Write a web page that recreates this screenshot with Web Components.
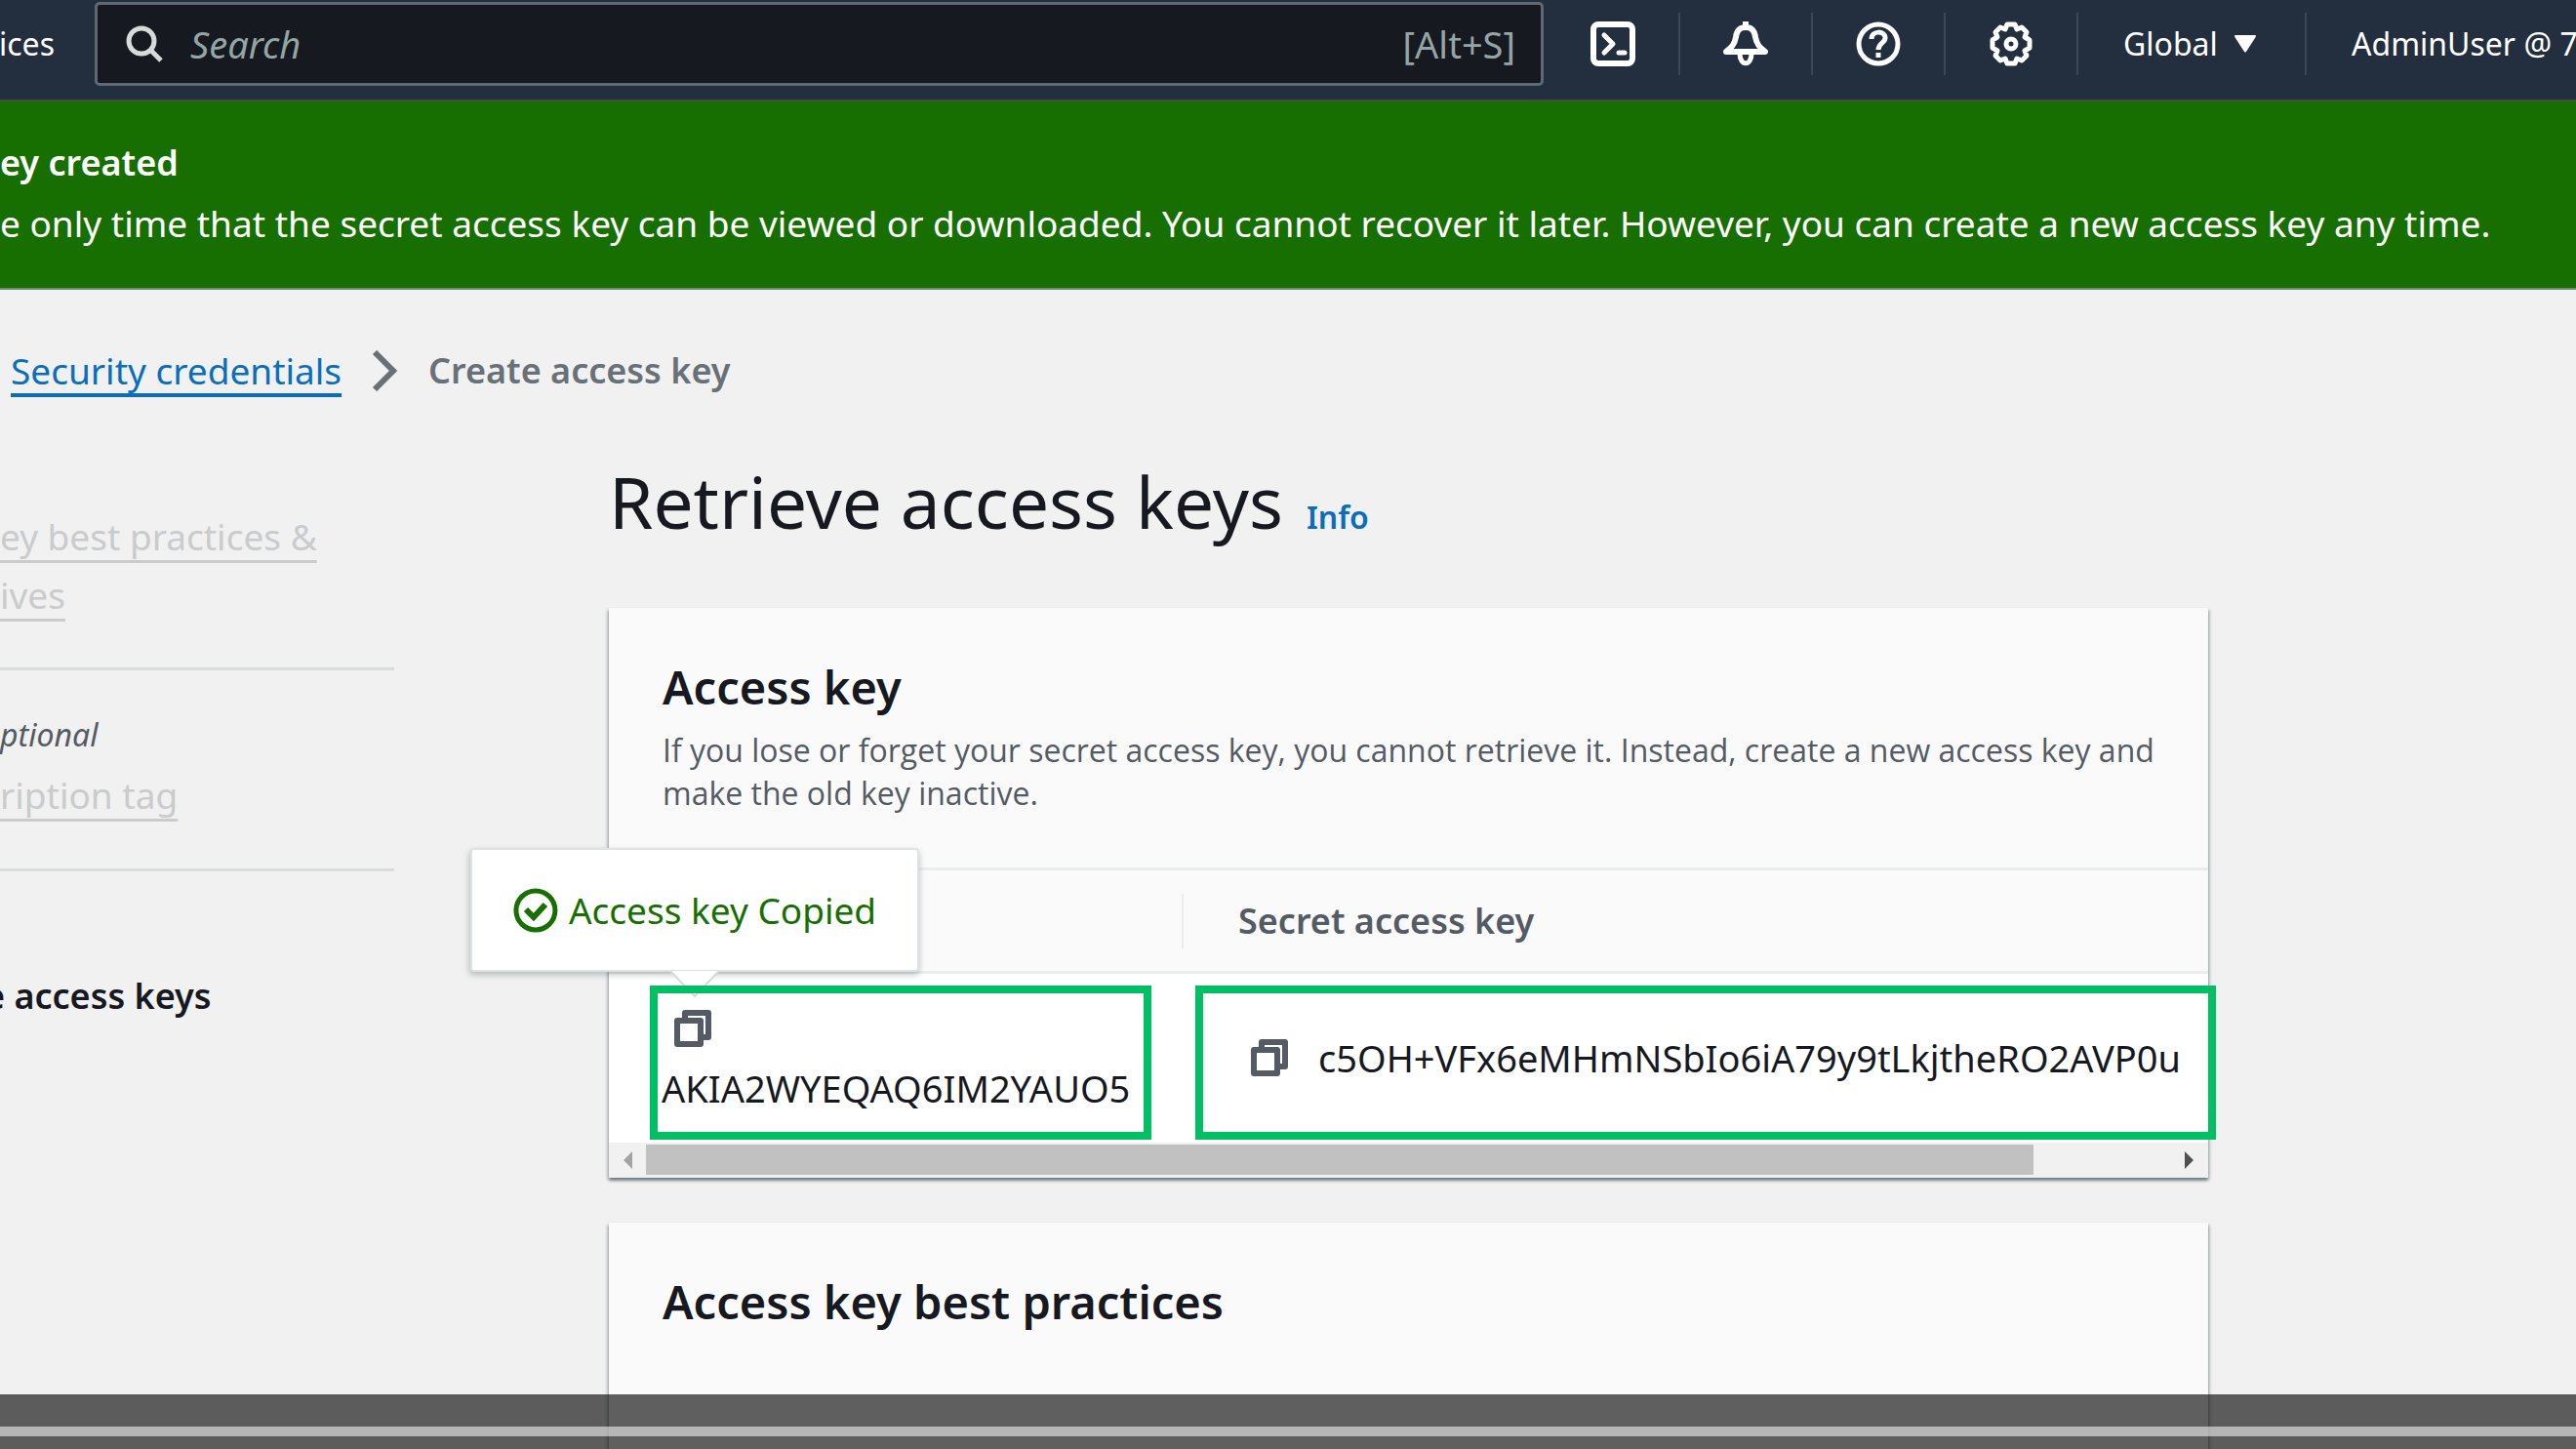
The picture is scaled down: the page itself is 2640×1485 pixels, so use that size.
<!DOCTYPE html>
<html lang="en">
<head>
<meta charset="utf-8">
<title>Retrieve access keys</title>
<style>
  html, body { margin: 0; height: 100%; }
  body {
    --ink: #16191f; --muted: #545b64; --link: #0a6ebd; --green: #166f00; --line: #eaeded; --mark: #00c063;
    --body: 37px; --bold: 36px; --key: 38px; --small: 32px;
    font-family: "Noto Sans", "Open Sans", sans-serif;
    font-size: var(--body); line-height: 60px; color: var(--ink);
    background: #f1f1f1; overflow: hidden;
  }
</style>
</head>
<body>
<console-page></console-page>
<script>
const define = (name, html) => customElements.define(name, class extends HTMLElement {
  constructor() {
    super();
    this.attachShadow({ mode: 'open' }).innerHTML =
      '<style>*{box-sizing:border-box}button{font:inherit;color:inherit;background:none;border:0;padding:0;margin:0;cursor:pointer}svg{display:block}</style>' + html;
  }
});

define('nav-icon', `
<style>
  :host { display: flex; flex: none; width: 136px; height: 64px; align-items: center; justify-content: center; border-right: 2px solid #3b4757; }
  button { display: flex; }
</style>
<button><slot></slot></button>`);

define('top-bar', `
<style>
  :host { display: block; color: #fff; }
  header { display: flex; align-items: center; height: 104px; padding-bottom: 12px; background: #232f3e; border-bottom: 2px solid #3f5043; font-size: var(--small); overflow: hidden; white-space: nowrap; }
  .services { flex: none; width: 97px; padding-right: 41px; display: flex; justify-content: flex-end; }
  label { flex: 1; min-width: 0; height: 86px; margin-right: 4px; display: flex; align-items: center; gap: 27px; padding: 0 26px 0 29px; background: #16191f; border: 3px solid #5f6873; border-radius: 5px; font-size: var(--key); color: #95a5a6; }
  label svg { flex: none; }
  input { flex: 1; min-width: 0; font: italic 38px "Noto Sans", sans-serif; color: inherit; background: none; border: 0; padding: 0; outline: 0; }
  input::placeholder { color: #95a5a6; opacity: 1; }
  .menu { flex: none; display: flex; align-items: center; height: 64px; }
  .region { width: 234px; padding-left: 46px; gap: 17px; border-right: 2px solid #3b4757; }
  .user { width: 276px; padding-left: 46px; }
</style>
<header>
  <button class="services">ices</button>
  <label>
    <svg width="39" height="39" viewBox="0 0 39 39" fill="none" stroke="#d5dbdb" stroke-width="5"><circle cx="16" cy="16" r="13"/><path d="M25 25L36 36"/></svg>
    <input type="text" placeholder="Search" aria-label="Search"><span>[Alt+S]</span>
  </label>
  <nav-icon><svg width="46" height="46" viewBox="0 0 46 46" fill="none" stroke="#fff" stroke-width="6" stroke-linejoin="round"><rect x="3" y="3" width="40" height="40" rx="5"/><path d="M14 14l9 9-9 9" stroke-linecap="round" stroke-width="5"/><path d="M29 32h6" stroke-linecap="round" stroke-width="5"/></svg></nav-icon>
  <nav-icon><svg width="46" height="46" viewBox="0 0 46 46" fill="none" stroke="#fff" stroke-width="6" stroke-linejoin="round"><path d="M23 0v6"/><path d="M3 31C10 26 12 22 13 16C14 9 17 6 23 6S32 9 33 16C34 22 36 26 43 31Z"/><path d="M17 33c0 13 12 13 12 0" stroke-width="5"/></svg></nav-icon>
  <nav-icon><svg width="46" height="46" viewBox="0 0 46 46" fill="none" stroke="#fff" stroke-width="5"><circle cx="23" cy="23" r="20"/><path d="M16 18c0-9 14-9 14-1c0 5-7 5-7 12"/><path d="M23 32v5"/></svg></nav-icon>
  <nav-icon><svg width="46" height="46" viewBox="0 0 46 46" fill="none" stroke="#fff" stroke-width="5" stroke-linejoin="round"><path d="M19 3h8l2 5 5-2 5 5-2 5 5 3v8l-5 3 2 5-5 5-5-2-2 5h-8l-2-5-5 2-5-5 2-5-5-3v-8l5-3-2-5 5-5 5 2z"/><circle cx="23" cy="23" r="5"/></svg></nav-icon>
  <button class="menu region">Global <svg width="22" height="18" viewBox="0 0 22 18" fill="#fff"><path d="M1 0h20q2 0 0 3L12 17q-1 1-2 0L1 3q-2-3 0-3z"/></svg></button>
  <button class="menu user">AdminUser @ 7</button>
</header>`);

define('flash-bar', `
<style>
  :host { display: block; padding: 32px 0 35px; background: var(--green); color: #fff; border-bottom: 2px solid #6f8a72; white-space: nowrap; overflow: hidden; line-height: 62px; }
  .title { font-size: var(--bold); font-weight: 600; }
</style>
<div class="title"><slot name="title"></slot></div>
<div><slot></slot></div>`);

define('bread-crumbs', `
<style>
  nav { display: flex; align-items: center; height: 60px; padding-left: 11px; gap: 31px; white-space: nowrap; }
  a { color: var(--link); text-decoration: underline; text-decoration-thickness: 4px; text-underline-offset: 9px; text-decoration-skip-ink: none; }
  b { font-size: var(--bold); font-weight: 600; color: #687078; }
</style>
<nav aria-label="Breadcrumbs">
  <a href="#credentials">Security credentials</a>
  <svg width="27" height="42" viewBox="0 0 27 42" fill="none" stroke="#687078" stroke-width="6"><path d="M3 2l19 19L3 40"/></svg>
  <b>Create access key</b>
</nav>`);

define('step-list', `
<style>
  :host { display: block; white-space: nowrap; }
  ol { list-style: none; margin: 0; padding: 0; }
  li { border-bottom: 3px solid #d9dcdc; }
  li:last-child { border: 0; }
  .first { height: 167px; }
  .second { height: 206px; padding-top: 34px; }
  .third { padding-top: 98px; font-size: var(--bold); font-weight: 600; text-indent: -16px; }
  a { color: #c9cbcc; text-decoration: underline; text-decoration-thickness: 3px; text-underline-offset: 10px; text-decoration-skip-ink: none; }
  i { display: block; font-size: var(--small); color: var(--muted); line-height: 64px; }
</style>
<ol>
  <li class="first"><a href="#step1">ey best practices &amp;<br>ives</a></li>
  <li class="second"><i>ptional</i><a href="#step2">ription tag</a></li>
  <li class="third" aria-current="step">e access keys</li>
</ol>`);

define('panel-card', `
<style>
  :host { display: block; background: #fafafa; box-shadow: 0 3px 3px rgba(0,28,36,.4), 2px 2px 3px rgba(0,28,36,.15), -2px 2px 3px rgba(0,28,36,.15); }
  .head { padding: 49px 32px 54px 55px; color: var(--muted); font: var(--small)/44px "Open Sans", sans-serif; }
  h2 { margin: 0 0 11px; font: 600 47px/64px "Noto Sans", sans-serif; color: var(--ink); }
</style>
<div class="head"><h2><slot name="title"></slot></h2><slot name="text"></slot></div>
<slot></slot>`);

define('copy-button', `
<style>:host { display: inline-block; } button { display: block; }</style>
<button aria-label="Copy"><svg width="40" height="40" viewBox="0 0 40 40" fill="none" stroke="#545b64" stroke-width="6" stroke-linejoin="round"><path d="M12 11V4h24v25h-7"/><path d="M4 12h24v24H4z"/></svg></button>`);

define('status-popover', `
<style>
  :host { position: absolute; left: 22px; bottom: 78px; translate: -50% 0; }
  .box { position: relative; display: flex; align-items: center; gap: 11px; height: 127px; padding: 0 42px; background: #fff; border: 2px solid #dfe2e2; border-radius: 4px; box-shadow: 0 3px 6px rgba(0,28,36,.25); color: var(--green); font-size: var(--body); white-space: nowrap; }
  .tip { position: absolute; left: 50%; top: 124px; margin-left: -25px; }
</style>
<div class="box" role="status">
  <svg width="46" height="46" viewBox="0 0 46 46" fill="none" stroke="#166f00" stroke-width="5"><circle cx="23" cy="23" r="20"/><path d="M13 22l8 8 12-13" stroke-width="6"/></svg>
  <slot></slot>
  <svg class="tip" width="50" height="28" viewBox="0 0 50 28"><path d="M1 0h48L25 26z" fill="#fff"/><path d="M1 1l24 25L49 1" fill="none" stroke="#d5dbdb" stroke-width="2"/></svg>
</div>`);

define('keys-table', `
<style>
  :host { display: block; }
  table { width: 100%; border-collapse: collapse; table-layout: fixed; }
  th { height: 106px; padding: 0; text-align: left; font-size: var(--bold); font-weight: 600; color: var(--muted); border-top: 3px solid var(--line); border-bottom: 3px solid var(--line); }
  th:first-child { width: 587px; }
  th div { height: 56px; line-height: 56px; padding-left: 56px; border-left: 2px solid var(--line); }
  th:first-child div { border: 0; }
  td { position: relative; height: 174px; padding: 0; background: #fff; white-space: nowrap; vertical-align: top; font-size: var(--key); }
  .stack { display: flex; flex-direction: column; align-items: flex-start; gap: 10px; padding: 36px 0 0 54px; line-height: 62px; }
  .anchor { position: relative; margin-left: 12px; height: 40px; display: flex; }
  .row { display: flex; align-items: center; gap: 30px; padding-left: 70px; height: 172px; }
  .mark { position: absolute; z-index: 2; top: 12px; height: 158px; border: 8px solid var(--mark); pointer-events: none; }
  .one { left: 42px; right: 31px; }
  .two { left: 14px; right: -8px; }
  .bar { display: flex; align-items: center; justify-content: space-between; height: 36px; padding: 0 15px; background: #f1f1f1; }
  .bar button { flex: none; display: flex; }
  .rail { flex: 1; height: 31px; margin: 0 14px; display: flex; }
  .thumb { width: 91%; background: #c1c1c1; }
</style>
<table>
  <thead><tr><th scope="col" aria-label="Key"><div></div></th><th scope="col"><div>Secret access key</div></th></tr></thead>
  <tbody><tr>
    <td><div class="stack"><span class="anchor"><copy-button></copy-button><status-popover>Access key Copied</status-popover></span><span>AKIA2WYEQAQ6IM2YAUO5</span></div><div class="mark one"></div></td>
    <td><div class="row"><copy-button></copy-button><span>c5OH+VFx6eMHmNSbIo6iA79y9tLkjtheRO2AVP0u</span></div><div class="mark two"></div></td>
  </tr></tbody>
</table>
<div class="bar">
  <button aria-label="Scroll left"><svg width="9" height="18" viewBox="0 0 9 18" fill="#a3a3a3"><path d="M9 0v18L0 9z"/></svg></button>
  <div class="rail"><div class="thumb"></div></div>
  <button aria-label="Scroll right"><svg width="9" height="18" viewBox="0 0 9 18" fill="#505050"><path d="M0 0v18l9-9z"/></svg></button>
</div>`);

define('player-strip', `
<style>
  :host { position: fixed; z-index: 5; left: 0; right: 0; bottom: 0; height: 56px; padding-top: 33px; background: rgba(0,0,0,.62); box-sizing: border-box; }
  div { height: 10px; background: rgba(255,255,255,.55); }
</style>
<div></div>`);

define('console-page', `
<style>
  :host { display: block; height: 100vh; overflow: hidden; }
  main { display: grid; grid-template-columns: 404px minmax(0, 1639px); column-gap: 220px; padding-top: 53px; }
  bread-crumbs { grid-column: 1 / -1; }
  step-list { padding-top: 110px; }
  .title { display: flex; align-items: baseline; gap: 24px; margin-bottom: 53px; padding-top: 48px; }
  h1 { margin: 0; font-size: 73px; font-weight: 400; line-height: 112px; white-space: nowrap; }
  .title a { font-size: var(--small); font-weight: 600; color: var(--link); text-decoration: none; }
  .cards { display: flex; flex-direction: column; gap: 46px; }
  .last { height: 400px; }
</style>
<top-bar></top-bar>
<flash-bar><span slot="title">ey created</span>e only time that the secret access key can be viewed or downloaded. You cannot recover it later. However, you can create a new access key any time.</flash-bar>
<main>
  <bread-crumbs></bread-crumbs>
  <step-list></step-list>
  <section>
    <div class="title"><h1>Retrieve access keys</h1><a href="#info">Info</a></div>
    <div class="cards">
      <panel-card>
        <span slot="title">Access key</span>
        <span slot="text">If you lose or forget your secret access key, you cannot retrieve it. Instead, create a new access key and make the old key inactive.</span>
        <keys-table></keys-table>
      </panel-card>
      <panel-card class="last"><span slot="title">Access key best practices</span></panel-card>
    </div>
  </section>
</main>
<player-strip></player-strip>`);
</script>
</body>
</html>
